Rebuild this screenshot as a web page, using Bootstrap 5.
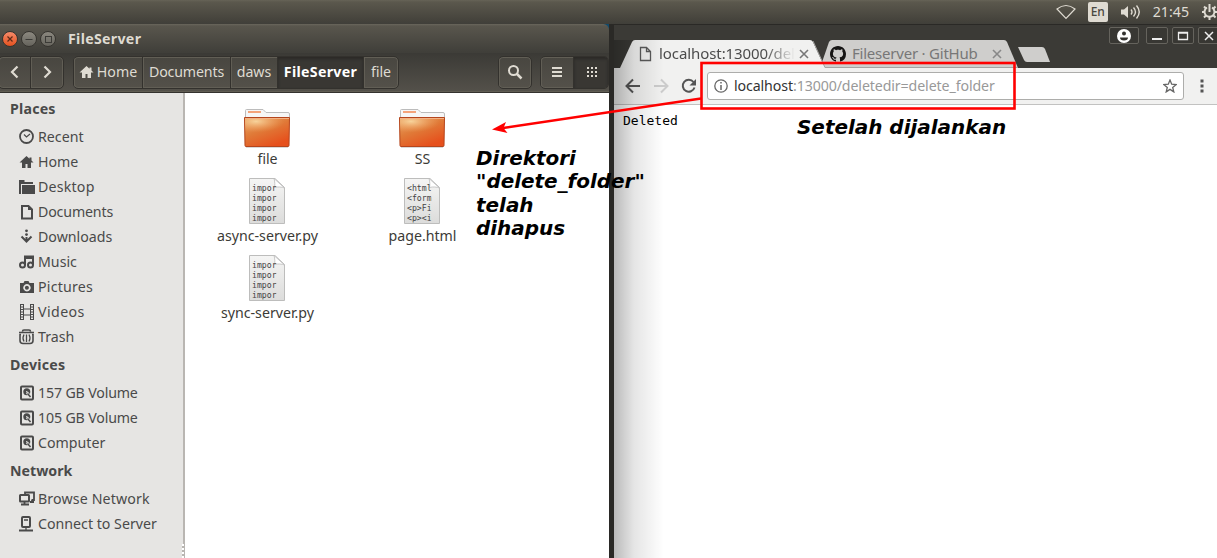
<!DOCTYPE html>
<html lang="en">
<head>
<meta charset="utf-8">
<title>FileServer</title>
<link href="https://cdn.jsdelivr.net/npm/bootstrap@5.3.0/dist/css/bootstrap.min.css" rel="stylesheet">
<style>
html,body{height:100%}
body{font-family:"Noto Sans","Open Sans",sans-serif;font-size:14.2px;line-height:20px;color:#3c3b37;background:#2b2a27;overflow:hidden}
svg{display:block;flex:none}
.screen{width:1217px;height:558px}
.panel{height:24px;background:linear-gradient(#666357 0,#5b584d 2px,#45433c 20px,#403f3a 24px);color:#dfdbd2}
.lang{width:20px;height:20px;background:#dfdbd2;color:#4a4841;border-radius:2px;font-size:12px;font-weight:500}
.files{width:609px;background:#fff}
.titlebar{height:29px;background:linear-gradient(#6a675c 0,#59564d 2px,#403f3a 28px);border-radius:0 6px 0 0;color:#dfdbd2;font-weight:700;padding-left:2px}
.corner{background:#124a6b}
.wbtn{width:16px;height:16px;border-radius:50%;margin-right:3px;background:linear-gradient(#8b887f,#66645d);border:1px solid #36342f}
.wbtn.shut{background:linear-gradient(#f58a6a,#e5521f)}
.tools{height:40px;background:linear-gradient(#3b3a36,#54514a);border-bottom:1px solid #34322e;box-shadow:inset 0 -1px #605d53;color:#dfdbd2}
.seg{height:33px;border:1px solid #33312d;border-radius:5px;background:linear-gradient(#484640,#54514a);box-shadow:inset 0 0 0 1px #615e55;overflow:hidden;margin-top:-1px}
.seg>div{height:100%;display:flex;align-items:center;justify-content:center;border-right:1px solid #33312d;box-shadow:inset 1px 0 #615e55;white-space:nowrap}
.seg>div:last-child{border-right:0}
.seg>.on{background:#393733;box-shadow:inset 0 2px 3px #2a2926;font-weight:700;color:#fff}
.places{width:185px;background:#e6e5e3;border-right:2px solid #b9b6b2;color:#4a4a4a}
.grip{width:2px;height:14px;right:-1px;bottom:0;background:repeating-linear-gradient(#fff 0 2px,#b9b6b2 2px 4px)}
.sec{height:31px;font-weight:700;padding-left:10px;letter-spacing:.2px}
.place{height:25px;padding-left:19px;gap:3px}
.wider{letter-spacing:.2px}
.widest{letter-spacing:.42px}
.tighter{letter-spacing:-.16px}
.grid-files{padding:7px 0 0 5px;grid-template-columns:155px 155px;grid-auto-rows:77px;align-content:start}
.pic{height:48px;margin-left:-1px;margin-right:1px}
.lbl{height:22px;line-height:22px;white-space:nowrap}
.snip{font-family:"DejaVu Sans Mono",monospace;font-size:8.2px}
.chrome{width:608px;background:#fff;border-left:5px solid #2a2926}
.strip{height:44px;background:#3b3a36;border-top:1px solid #2a2926}
.omni{height:37px;background:#f1f1f0;border-bottom:1px solid #c2c2c1}
.url{height:28px;width:477px;background:#fff;border:1px solid #adadab;border-radius:3px;color:#999}
.shade{left:614px;top:40px;width:50px;bottom:0;background:linear-gradient(90deg,rgba(0,0,0,.27),rgba(0,0,0,.1) 40%,transparent)}
.note{font-family:"DejaVu Sans",sans-serif;font-style:italic;font-weight:700;color:#000;font-size:19.95px;line-height:23.4px;white-space:nowrap}
.ctl{height:17px;border:1px solid #65635d;border-radius:2px;background:#383733}
.tabtext{font-size:15px;white-space:nowrap}
.fade-end{-webkit-mask-image:linear-gradient(90deg,#000 78%,transparent);mask-image:linear-gradient(90deg,#000 78%,transparent);overflow:hidden}
</style>
</head>
<body>
<svg width="0" height="0" class="position-absolute">
<defs>
<linearGradient id="fo" x1="0" y1="0" x2=".6" y2="1"><stop offset="0" stop-color="#e9a766"/><stop offset=".5" stop-color="#e07a38"/><stop offset="1" stop-color="#e6501c"/></linearGradient>
<radialGradient id="fg" cx=".25" cy=".2" r=".65"><stop offset="0" stop-color="#f7d39b"/><stop offset="1" stop-color="#f0a060" stop-opacity="0"/></radialGradient>
<linearGradient id="pg" x1="0" y1="0" x2="0" y2="1"><stop offset="0" stop-color="#f5f5f4"/><stop offset="1" stop-color="#dcdcdb"/></linearGradient>
<clipPath id="sheet"><path d="M0 0H28.500V45.500H0z"/></clipPath>
<symbol id="folder" viewBox="0 0 48 48"><path d="M2.500 18V10.500q0-1 1-1H20l3 3H45q1.500 0 1.500 1.500V18z" fill="#f6f6f6" stroke="#bcbcbc"/><path d="M5 11h13v2H5z" fill="#f4a37a"/><path d="M1.500 17.500H46.500L46 45.500q0 1-1 1H3q-1 0-1-1z" fill="url(#fo)" stroke="#b5451c"/><path d="M2 18H46V28C32 29 17 34 2 35z" fill="url(#fg)"/><path d="M2 18.500H46" stroke="#f3b184"/><path d="M3 47.500H45" stroke="#000" opacity=".15"/></symbol>
<symbol id="page" viewBox="0 0 38 48"><path d="M1.500 1.500H27L36.500 10.500V46.500H1.500z" fill="url(#pg)" stroke="#bdbdbc"/><path d="M26 1.500C27 5 27 8 26.500 10.500C30 9.500 34 10 36.500 11z" fill="#fff" stroke="#bbb" stroke-width=".8"/></symbol>
<symbol id="home" viewBox="0 0 16 16"><path fill="currentColor" d="M7.500 2 .5 8.500H3V14h3.500v-4h2v4H12V8.500h2.500L12.500 6.600V3.500h-2v1.300z"/></symbol>
<symbol id="doc" viewBox="0 0 16 16"><path fill="none" stroke="currentColor" stroke-width="2" d="M3 2H9.500L13 5.500V14.500H3z"/><path d="M9 2v4h4z" fill="currentColor"/></symbol>
<symbol id="disk" viewBox="0 0 16 16"><rect x="2" y="1.500" width="12" height="13" rx="1" fill="none" stroke="currentColor" stroke-width="2"/><circle cx="7.800" cy="6.800" r="3.500" fill="currentColor"/><circle cx="7.800" cy="6.800" r=".8" fill="#e6e5e3"/><path d="M8 7.500 12 12.500" stroke="#e6e5e3" stroke-width="2.600"/><path d="M8.500 8.500 11.500 12" stroke="currentColor" stroke-width="1.600"/></symbol>
</defs>
</svg>
<div class="screen position-relative d-flex flex-column">
  <div class="panel d-flex align-items-center justify-content-end">
    <svg width="20" height="16" viewBox="0 0 20 16" style="margin-right:12px"><path d="M1 5Q10-2 19 5L10 14.500z" fill="none" stroke="#dfdbd2" stroke-width="1.200"/></svg>
    <div class="lang d-flex align-items-center justify-content-center" style="margin-right:12px">En</div>
    <svg width="22" height="16" viewBox="0 0 22 16" style="margin-right:11px"><path d="M1 5.500h3L8 2v12L4 10.500H1z" fill="#dfdbd2"/><path d="M11 5.500q2 2.500 0 5M13.500 3.500q4 4.500 0 9M16.500 1.500q5.500 6.500 0 13" fill="none" stroke="#dfdbd2" stroke-width="1.400"/></svg>
    <span style="margin-right:12px;font-size:14.200px">21:45</span>
    <svg width="16" height="18" viewBox="0 0 16 18"><g fill="none" stroke="#dfdbd2" stroke-width="2"><path d="M6 4.500A5 5 0 1 0 11 4.500"/><path d="M8.500 1v8"/><path d="M1 9h2.500M3 3.500 5 5.500M3 14.500 5 12.500M8.500 14v3M12.500 12.500 14.500 14.500M12.500 5.500 14.500 3.500M13.500 9H16"/></g></svg>
  </div>
  <div class="d-flex flex-fill" style="min-height:0">
    <section class="files d-flex flex-column">
      <div class="corner"><div class="titlebar d-flex align-items-center">
        <div class="wbtn shut"><svg width="14" height="14"><path d="m4.500 4.500 5 5m0-5-5 5" stroke="#5c2a18" stroke-width="1.200"/></svg></div>
        <div class="wbtn"><svg width="14" height="14"><path d="M3.500 7.500h7" stroke="#3c3b37"/></svg></div>
        <div class="wbtn"><svg width="14" height="14"><rect x="4.500" y="4.500" width="6" height="6" fill="none" stroke="#3c3b37"/></svg></div>
        <span style="margin-left:9px;letter-spacing:.3px">FileServer</span>
      </div></div>
      <div class="tools d-flex align-items-center">
        <div class="seg d-flex" style="width:66px;margin-left:-2px">
          <div style="width:33px"><svg width="12" height="14"><path d="M8.500 1.500 3 7l5.500 5.500" fill="none" stroke="#dfdbd2" stroke-width="2.200"/></svg></div>
          <div style="width:33px"><svg width="12" height="14"><path d="M3.500 1.500 9 7l-5.500 5.500" fill="none" stroke="#dfdbd2" stroke-width="2.200"/></svg></div>
        </div>
        <div class="seg d-flex" style="margin-left:9px;width:326px">
          <div style="width:69px"><svg width="16" height="16"><use href="#home"/></svg><span style="margin-left:2px">Home</span></div>
          <div style="width:88px"><span class="tighter">Documents</span></div>
          <div style="width:47px">daws</div>
          <div class="on" style="width:86px"><span style="letter-spacing:.3px">FileServer</span></div>
          <div style="width:34px">file</div>
        </div>
        <div class="seg d-flex" style="margin-left:99px;width:34px"><div class="w-100"><svg width="16" height="16"><circle cx="6.500" cy="6.500" r="4.500" fill="none" stroke="#dfdbd2" stroke-width="2"/><path d="m9.500 9.500 5 5" stroke="#dfdbd2" stroke-width="2.500"/></svg></div></div>
        <div class="seg d-flex" style="margin-left:8px;width:69px">
          <div style="width:33px"><svg width="12" height="12"><path d="M1 2h10M1 6h10M1 10h10" stroke="#dfdbd2" stroke-width="2"/></svg></div>
          <div class="on" style="width:35px"><svg width="12" height="12"><path d="M2 2h10M2 6h10M2 10h10" stroke="#dfdbd2" stroke-width="2" stroke-dasharray="2 2"/></svg></div>
        </div>
      </div>
      <div class="d-flex flex-fill">
        <nav class="places position-relative">
          <div class="sec d-flex align-items-center">Places</div>
          <div class="place d-flex align-items-center"><svg width="16" height="16"><circle cx="7.500" cy="7.500" r="6.500" fill="none" stroke="currentColor" stroke-width="1.800"/><path d="M5 5.500 7.500 8 11 5" fill="none" stroke="currentColor" stroke-width="1.200"/></svg><span>Recent</span></div>
          <div class="place d-flex align-items-center"><svg width="16" height="16"><use href="#home"/></svg><span>Home</span></div>
          <div class="place d-flex align-items-center"><svg width="16" height="16"><path d="M0 1h5.500v2H14v2H2v10H0zM3 6h13v9H3z" fill="currentColor"/></svg><span class="wider">Desktop</span></div>
          <div class="place d-flex align-items-center"><svg width="16" height="16"><use href="#doc"/></svg><span class="tighter">Documents</span></div>
          <div class="place d-flex align-items-center"><svg width="16" height="16"><circle cx="7.500" cy="1.800" r="1.400" fill="currentColor"/><circle cx="7.500" cy="5.600" r="1.400" fill="currentColor"/><path d="M7.500 8v4M2.500 7.500 7.500 12.500 12.500 7.500" fill="none" stroke="currentColor" stroke-width="2"/></svg><span>Downloads</span></div>
          <div class="place d-flex align-items-center"><svg width="16" height="16"><path d="M6 11V2.500H14V11M6 4h8" fill="none" stroke="currentColor" stroke-width="2"/><circle cx="3.500" cy="11" r="2.500" fill="none" stroke="currentColor" stroke-width="2"/><circle cx="11.500" cy="11" r="2.500" fill="none" stroke="currentColor" stroke-width="2"/></svg><span>Music</span></div>
          <div class="place d-flex align-items-center"><svg width="16" height="16"><path fill-rule="evenodd" d="M1 4h3.500L5.500 2h4l1 2H15v10H1zM7.900 5a3.700 3.700 0 1 0 .1 0z" fill="currentColor"/><circle cx="7.900" cy="8.700" r="2" fill="currentColor"/></svg><span class="wider">Pictures</span></div>
          <div class="place d-flex align-items-center"><svg width="16" height="16"><path d="M1.500 0v16M4.500 0v16M11.500 0v16M14.500 0v16M5 5h6M5 11h6" stroke="currentColor" stroke-width="1"/><path d="M3 0v16M13 0v16" stroke="currentColor" stroke-width="3" stroke-dasharray="1 1.500"/></svg><span class="widest">Videos</span></div>
          <div class="place d-flex align-items-center"><svg width="16" height="16"><path d="M3.500 2.500Q3.500 1 5 1h5q1.500 0 1.500 1.500M0 3.500h15" fill="none" stroke="currentColor" stroke-width="1.600"/><path d="M2 5.500H1v6q0 3 3 3h7q3 0 3-3v-6h-1" fill="none" stroke="currentColor" stroke-width="1.600"/><path d="M5 5.500q-2 3.500 0 7M7.500 5.500v7.500M10 5.500q2 3.500 0 7" fill="none" stroke="currentColor" stroke-width="1.300"/></svg><span>Trash</span></div>
          <div class="sec d-flex align-items-center">Devices</div>
          <div class="place d-flex align-items-center"><svg width="16" height="16"><use href="#disk"/></svg><span class="tighter">157 GB Volume</span></div>
          <div class="place d-flex align-items-center"><svg width="16" height="16"><use href="#disk"/></svg><span class="tighter">105 GB Volume</span></div>
          <div class="place d-flex align-items-center"><svg width="16" height="16"><use href="#disk"/></svg><span>Computer</span></div>
          <div class="sec d-flex align-items-center" style="letter-spacing:0">Network</div>
          <div class="place d-flex align-items-center"><svg width="16" height="16"><path d="M6 3V1.500H15V9h-2.500M13 9v2" fill="none" stroke="currentColor" stroke-width="1.800"/><rect x="1" y="4" width="9" height="6.500" rx=".5" fill="#e6e5e3" stroke="currentColor" stroke-width="2"/><path d="M5.500 11v2M2 13.500h8M11 11h4" stroke="currentColor" stroke-width="1.800"/></svg><span style="letter-spacing:.13px">Browse Network</span></div>
          <div class="place d-flex align-items-center"><svg width="16" height="16"><rect x="3" y="1" width="8" height="10" rx="1" fill="none" stroke="currentColor" stroke-width="2"/><path d="M5 4h4M7 11v3" stroke="currentColor" stroke-width="1.300"/><path d="M0 14.500h14" stroke="currentColor" stroke-width="2"/></svg><span>Connect to Server</span></div>
          <div class="grip position-absolute"></div>
        </nav>
        <div class="grid-files d-grid text-center">
          <div><div class="pic d-flex justify-content-center"><svg width="48" height="48"><use href="#folder"/></svg></div><div class="lbl"><span>file</span></div></div>
          <div><div class="pic d-flex justify-content-center"><svg width="48" height="48"><use href="#folder"/></svg></div><div class="lbl"><span>SS</span></div></div>
          <div><div class="pic d-flex justify-content-center"><svg width="38" height="48"><use href="#page"/><g class="snip" fill="#444" clip-path="url(#sheet)"><text x="4" y="14">impor</text><text x="4" y="24">impor</text><text x="4" y="34">impor</text><text x="4" y="44">impor</text></g></svg></div><div class="lbl"><span>async-server.py</span></div></div>
          <div><div class="pic d-flex justify-content-center"><svg width="38" height="48"><use href="#page"/><g class="snip" fill="#444" clip-path="url(#sheet)"><text x="4" y="14">&lt;html</text><text x="4" y="24">&lt;form</text><text x="4" y="34">&lt;p&gt;Fi</text><text x="4" y="44">&lt;p&gt;&lt;i</text></g></svg></div><div class="lbl"><span>page.html</span></div></div>
          <div><div class="pic d-flex justify-content-center"><svg width="38" height="48"><use href="#page"/><g class="snip" fill="#444" clip-path="url(#sheet)"><text x="4" y="14">impor</text><text x="4" y="24">impor</text><text x="4" y="34">impor</text><text x="4" y="44">impor</text></g></svg></div><div class="lbl"><span>sync-server.py</span></div></div>
        </div>
      </div>
    </section>
    <section class="chrome d-flex flex-column">
      <div class="strip position-relative">
        <svg width="603" height="43" viewBox="614 25 603 43">
          <path d="M820 68 829 42Q830 40 832 40H1004Q1006 40 1007 42L1018 68z" fill="#cfcecc"/>
          <path d="M620 68 632 42Q633 40 635 40H810Q812 40 813 42L825 68z" fill="#f1f1f0"/>
          <path d="M813 41 825 67.500H1018" fill="none" stroke="#a5a4a2"/>
          <path d="M1018 47H1042Q1044 47 1045 49L1050 62H1027Q1025 62 1024 60z" fill="#cfcecc"/>
          <path d="M640.500 47.500h6l4 4v9h-10zM646.500 47.500v4h4" fill="none" stroke="#5a5a5a" stroke-width="1.300"/>
          <path d="m800 50 8 8m0-8-8 8" stroke="#777" stroke-width="1.600"/><path d="m993 50 8 8m0-8-8 8" stroke="#888" stroke-width="1.600"/>
          <path transform="translate(830 46)" fill="#161514" d="M8 0C3.580 0 0 3.580 0 8c0 3.540 2.290 6.530 5.470 7.590.4.070.55-.17.55-.38 0-.19-.01-.82-.01-1.490-2.010.37-2.530-.49-2.690-.94-.09-.23-.48-.94-.82-1.130-.28-.15-.68-.52-.01-.53.63-.01 1.080.58 1.230.82.72 1.210 1.870.87 2.330.66.07-.52.28-.87.51-1.070-1.780-.2-3.640-.89-3.640-3.950 0-.87.31-1.590.82-2.150-.08-.2-.36-1.020.08-2.120 0 0 .67-.21 2.200.82.640-.18 1.320-.27 2-.27s1.360.09 2 .27c1.530-1.040 2.200-.82 2.200-.82.440 1.100.16 1.920.08 2.120.51.56.82 1.270.82 2.150 0 3.070-1.870 3.750-3.650 3.950.29.25.54.73.54 1.480 0 1.070-.01 1.930-.01 2.200 0 .21.15.46.55.38A8 8 0 0 0 16 8c0-4.420-3.580-8-8-8"/>
        </svg>
        <span class="tabtext fade-end position-absolute" style="left:45px;top:18px;width:136px;color:#4c4c4c;letter-spacing:-.08px">localhost:13000/del</span>
        <span class="tabtext position-absolute" style="left:238px;top:18px;color:#777;letter-spacing:-.22px">Fileserver · GitHub</span>
        <div class="position-absolute d-flex" style="left:495px;top:2px">
          <div class="ctl d-flex align-items-center justify-content-center" style="width:30px"><svg width="14" height="14"><circle cx="7" cy="7" r="7" fill="#fff"/><circle cx="7" cy="4.500" r="2" fill="#33322f"/><path d="M3 8.500h8q0 3-4 3t-4-3" fill="#33322f"/></svg></div>
          <div class="ctl d-flex align-items-center justify-content-center" style="width:22px;margin-left:7px"><svg width="12" height="12"><path d="M1 9h10" stroke="#eee" stroke-width="2"/></svg></div>
          <div class="ctl d-flex align-items-center justify-content-center" style="width:22px;margin-left:4px"><svg width="12" height="12"><path d="M1.500 2.500h9v7h-9zM1 3h10" fill="none" stroke="#eee" stroke-width="1.300"/></svg></div>
          <div class="ctl d-flex align-items-center justify-content-center" style="width:22px;margin-left:4px"><svg width="12" height="12"><path d="m2 2 8 8m0-8-8 8" stroke="#eee" stroke-width="1.500"/></svg></div>
        </div>
      </div>
      <div class="omni d-flex align-items-center">
        <svg width="92" height="36" viewBox="614 68 92 36" fill="none"><path d="M640 86H627M633 79.500 626.500 86 633 92.500" stroke="#555" stroke-width="2"/><path d="M654 86H667M661 79.500 667.500 86 661 92.500" stroke="#ccc" stroke-width="2"/><path d="M693.500 82A6 6 0 1 0 694.500 87.500" stroke="#555" stroke-width="2"/><path d="M696 79v6.500h-6.500z" fill="#555"/></svg>
        <div class="url d-flex align-items-center" style="margin-left:1px">
          <svg width="14" height="14" style="margin-left:6px"><circle cx="7" cy="7" r="6.200" fill="none" stroke="#666" stroke-width="1.300"/><path d="M7 6v5M7 3v1.600" stroke="#666" stroke-width="1.500"/></svg>
          <span class="text-nowrap" style="margin-left:6px;letter-spacing:-.11px"><span style="color:#333">localhost</span>:13000/deletedir=delete_folder</span>
          <svg class="ms-auto" width="14" height="14" style="margin-right:6px"><path d="M7 1 8.700 5.200 13.200 5.500 9.700 8.400 10.800 12.900 7 10.400 3.200 12.900 4.300 8.400.8 5.500 5.300 5.200z" fill="none" stroke="#666" stroke-width="1.300"/></svg>
        </div>
        <svg width="4" height="16" style="margin-left:16px"><path d="M.5 3h3M.5 8h3M.5 13h3" stroke="#555" stroke-width="3"/></svg>
      </div>
      <div style="padding:5px 0 0 9px"><span style="font:13px 'DejaVu Sans Mono',monospace;color:#000">Deleted</span></div>
    </section>
  </div>
  <div class="shade position-absolute"></div>
  <svg class="position-absolute top-0 start-0" width="1217" height="250"><rect x="701.500" y="63" width="313" height="45.500" fill="none" stroke="#f00" stroke-width="2.600"/><path d="M701 98.500 503 128" stroke="#f00" stroke-width="2.600"/><path d="M492 129.500 506 122 503.500 128 507.500 133z" fill="#f00"/></svg>
  <div class="note position-absolute" style="left:476px;top:147px"><span>Direktori</span><br><span>"delete_folder"</span><br><span>telah</span><br><span>dihapus</span></div>
  <div class="note position-absolute" style="left:797px;top:116px"><span>Setelah dijalankan</span></div>
</div>
<script src="https://cdn.jsdelivr.net/npm/bootstrap@5.3.0/dist/js/bootstrap.bundle.min.js"></script>
</body>
</html>
